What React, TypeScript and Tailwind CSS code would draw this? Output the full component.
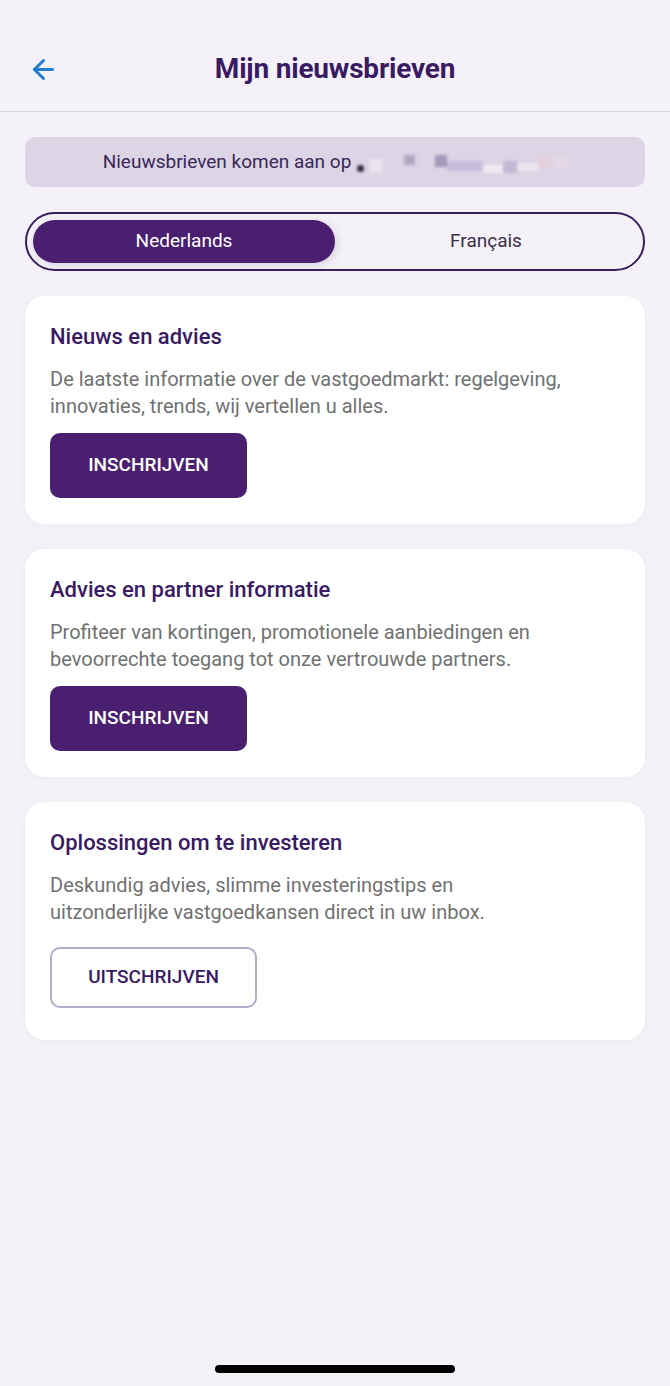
import { ArrowLeft } from "lucide-react"

type Newsletter = {
  title: string
  description: string[]
  subscribed: boolean
}

const newsletters: Newsletter[] = [
  {
    title: "Nieuws en advies",
    description: [
      "De laatste informatie over de vastgoedmarkt: regelgeving,",
      "innovaties, trends, wij vertellen u alles.",
    ],
    subscribed: false,
  },
  {
    title: "Advies en partner informatie",
    description: [
      "Profiteer van kortingen, promotionele aanbiedingen en",
      "bevoorrechte toegang tot onze vertrouwde partners.",
    ],
    subscribed: false,
  },
  {
    title: "Oplossingen om te investeren",
    description: [
      "Deskundig advies, slimme investeringstips en",
      "uitzonderlijke vastgoedkansen direct in uw inbox.",
    ],
    subscribed: true,
  },
]

// blurred e-mail address, pixelated in the screenshot
function BlurredEmail() {
  return (
    <span className="relative inline-flex items-end h-[22px] w-[210px] ml-[6px] blur-[1.5px]">
      <span className="w-[7px] h-[7px] bg-[#2d2438] rounded-sm mb-[1px]" />
      <span className="w-[14px] h-[14px] bg-[#e9e4ef] ml-[6px]" />
      <span className="w-[12px] h-[10px] bg-[#b3a7c3] ml-[22px] mb-[8px]" />
      <span className="w-[14px] h-[12px] bg-[#a597b8] ml-[20px] mb-[6px]" />
      <span className="w-[40px] h-[10px] bg-[#c8bcda] mb-[2px]" />
      <span className="w-[22px] h-[8px] bg-[#efe9f1] mb-0" />
      <span className="w-[16px] h-[12px] bg-[#c4b8d4] mb-[0px]" />
      <span className="w-[24px] h-[8px] bg-[#ebe5ee] mb-[2px]" />
      <span className="w-[14px] h-[12px] bg-[#e4cfdb] mb-[6px]" />
      <span className="w-[14px] h-[10px] bg-[#e6d8e2] ml-[4px] mb-[6px]" />
    </span>
  )
}

function NewsletterCard({ item }: { item: Newsletter }) {
  return (
    <div
      className={`bg-white rounded-[20px] px-[25px] pt-[27px] shadow-[0_1px_6px_rgba(60,30,100,0.04)] ${
        item.subscribed ? "pb-[32px]" : "pb-[26px]"
      }`}
    >
      <h3 className="text-[22px] leading-[28px] font-medium text-[#3a1a63]">{item.title}</h3>
      <p className="mt-[15px] text-[20px] leading-[27px] text-[#717171]">
        {item.description[0]}
        <br />
        {item.description[1]}
      </p>
      {item.subscribed ? (
        <button className="mt-[21px] h-[61px] w-[207px] rounded-[10px] border-2 border-[#b6a9c9] bg-white text-[19px] font-medium text-[#3a1a63]">
          UITSCHRIJVEN
        </button>
      ) : (
        <button className="mt-[13px] h-[65px] w-[197px] rounded-[10px] bg-[#4a1f6f] text-[19px] font-medium text-white">
          INSCHRIJVEN
        </button>
      )}
    </div>
  )
}

export default function App() {
  return (
    <div
      className="min-h-[1386px] bg-[#f4f2f8] flex flex-col"
      style={{ fontFamily: "Roboto, 'Noto Sans', sans-serif" }}
    >
      {/* Header */}
      <header className="h-[112px] border-b border-[#d9d6de] pt-[27px]">
        <div className="relative h-[84px] flex items-center justify-center">
          <ArrowLeft className="absolute left-[28px] w-[31px] h-[31px] text-[#1f7ed0]" strokeWidth={2.3} />
          <h1 className="text-[28px] font-bold text-[#3a1a63] tracking-[-0.2px]">Mijn nieuwsbrieven</h1>
        </div>
      </header>

      <main className="px-[25px] pt-[25px] flex flex-col">
        {/* Info banner */}
        <div className="h-[50px] rounded-[10px] bg-[#dcd5e6] flex items-center justify-center text-[19px] text-[#3a2757]">
          <span>Nieuwsbrieven komen aan op</span>
          <BlurredEmail />
        </div>

        {/* Language switch */}
        <div className="mt-[25px] h-[59px] rounded-full border-2 border-[#3a1d5c] p-[6px] grid grid-cols-2">
          <button className="rounded-full bg-[#4a1f6f] text-white text-[19px] shadow-[2px_2px_8px_rgba(60,30,100,0.15)]">
            Nederlands
          </button>
          <button className="rounded-full text-[#3a2f48] text-[19px]">Français</button>
        </div>

        <div className="mt-[25px] flex flex-col gap-[25px]">
          {newsletters.map((n) => (
            <NewsletterCard key={n.title} item={n} />
          ))}
        </div>
      </main>

      <div className="flex-1" />

      {/* Home indicator */}
      <div className="flex justify-center pb-[13px]">
        <div className="w-[240px] h-[8px] rounded-full bg-black" />
      </div>
    </div>
  )
}
